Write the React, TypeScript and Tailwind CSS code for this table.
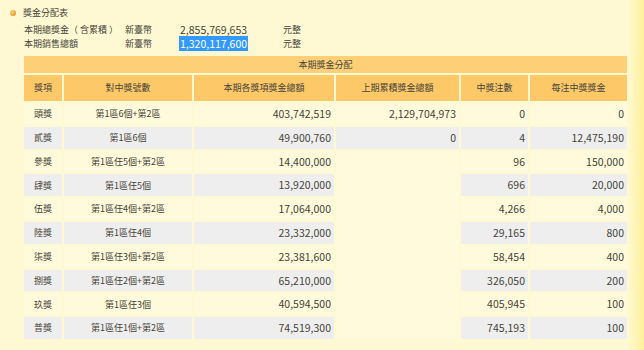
import React from "react";

type Prize = {
    name: string;
    rule: string;
    total: string;
    carry?: string;
    count: string;
    each: string;
};

const prizes: Prize[] = [
    { name: "頭獎", rule: "第1區6個+第2區", total: "403,742,519", carry: "2,129,704,973", count: "0", each: "0" },
    { name: "貳獎", rule: "第1區6個", total: "49,900,760", carry: "0", count: "4", each: "12,475,190" },
    { name: "參獎", rule: "第1區任5個+第2區", total: "14,400,000", count: "96", each: "150,000" },
    { name: "肆獎", rule: "第1區任5個", total: "13,920,000", count: "696", each: "20,000" },
    { name: "伍獎", rule: "第1區任4個+第2區", total: "17,064,000", count: "4,266", each: "4,000" },
    { name: "陸獎", rule: "第1區任4個", total: "23,332,000", count: "29,165", each: "800" },
    { name: "柒獎", rule: "第1區任3個+第2區", total: "23,381,600", count: "58,454", each: "400" },
    { name: "捌獎", rule: "第1區任2個+第2區", total: "65,210,000", count: "326,050", each: "200" },
    { name: "玖獎", rule: "第1區任3個", total: "40,594,500", count: "405,945", each: "100" },
    { name: "普獎", rule: "第1區任1個+第2區", total: "74,519,300", count: "745,193", each: "100" },
];

const headers = ["獎項", "對中獎號數", "本期各獎項獎金總額", "上期累積獎金總額", "中獎注數", "每注中獎獎金"];

const App: React.FC = () => (
    <div
        className="w-[644px] h-[350px] overflow-hidden bg-[linear-gradient(90deg,#fff9d3_627px,#fff09a_644px)] text-[9px] text-[#46443a]"
        style={{ fontFamily: '"Noto Sans CJK TC", "Noto Sans", sans-serif' }}
    >
        <div className="pt-[6px] pl-[10px] flex items-center h-[20px] leading-[14px]">
            <span className="w-[6px] h-[6px] rounded-full bg-[radial-gradient(circle_at_35%_35%,#ffd27a,#e08a10)] mr-[7px]" />
            <span>獎金分配表</span>
        </div>
        <div className="pl-[24px] mt-[3px] leading-[14px]">
            <div className="flex items-center">
                <span className="w-[101px] whitespace-nowrap">本期總獎金（ 含累積 ）</span>
                <span className="w-[55px]">新臺幣</span>
                <span className="w-[103px] text-[10.5px]">2,855,769,653</span>
                <span>元整</span>
            </div>
            <div className="flex items-center">
                <span className="w-[101px]">本期銷售總額</span>
                <span className="w-[55px]">新臺幣</span>
                <span className="w-[103px] text-[10.5px]">
                    <span className="bg-[#3399ff] text-white pr-[1px] ml-[-1px] pl-[1px]">1,320,117,600</span>
                </span>
                <span>元整</span>
            </div>
        </div>
        <div className="ml-[24px] mt-[5px] grid grid-cols-[38px_128px_140px_123px_67px_97px] grid-rows-[17px_26px_repeat(10,21.8px)] gap-[2px]">
            <div className="col-span-6 bg-[#fdd077] flex items-center justify-center">本期獎金分配</div>
            {headers.map((h) => (
                <div key={h} className="bg-[#fdc868] flex items-center justify-center">
                    {h}
                </div>
            ))}
            {prizes.map((p, i) => {
                const bg = i % 2 === 0 ? "bg-[#fffadb]" : "bg-[#eeeeee]";
                return (
                    <React.Fragment key={p.name}>
                        <div className={`${bg} flex items-center justify-center`}>{p.name}</div>
                        <div className={`${bg} flex items-center justify-center`}>{p.rule}</div>
                        <div className={`${bg} flex items-center justify-end pr-[3px] text-[10.5px]`}>{p.total}</div>
                        {i < 2 && (
                            <div className={`${bg} flex items-center justify-end pr-[3px] text-[10.5px]`}>{p.carry}</div>
                        )}
                        {i === 2 && <div className="row-span-8 bg-[#fffadb]" />}
                        <div className={`${bg} flex items-center justify-end pr-[3px] text-[10.5px]`}>{p.count}</div>
                        <div className={`${bg} flex items-center justify-end pr-[3px] text-[10.5px]`}>{p.each}</div>
                    </React.Fragment>
                );
            })}
        </div>
    </div>
);

export default App;
